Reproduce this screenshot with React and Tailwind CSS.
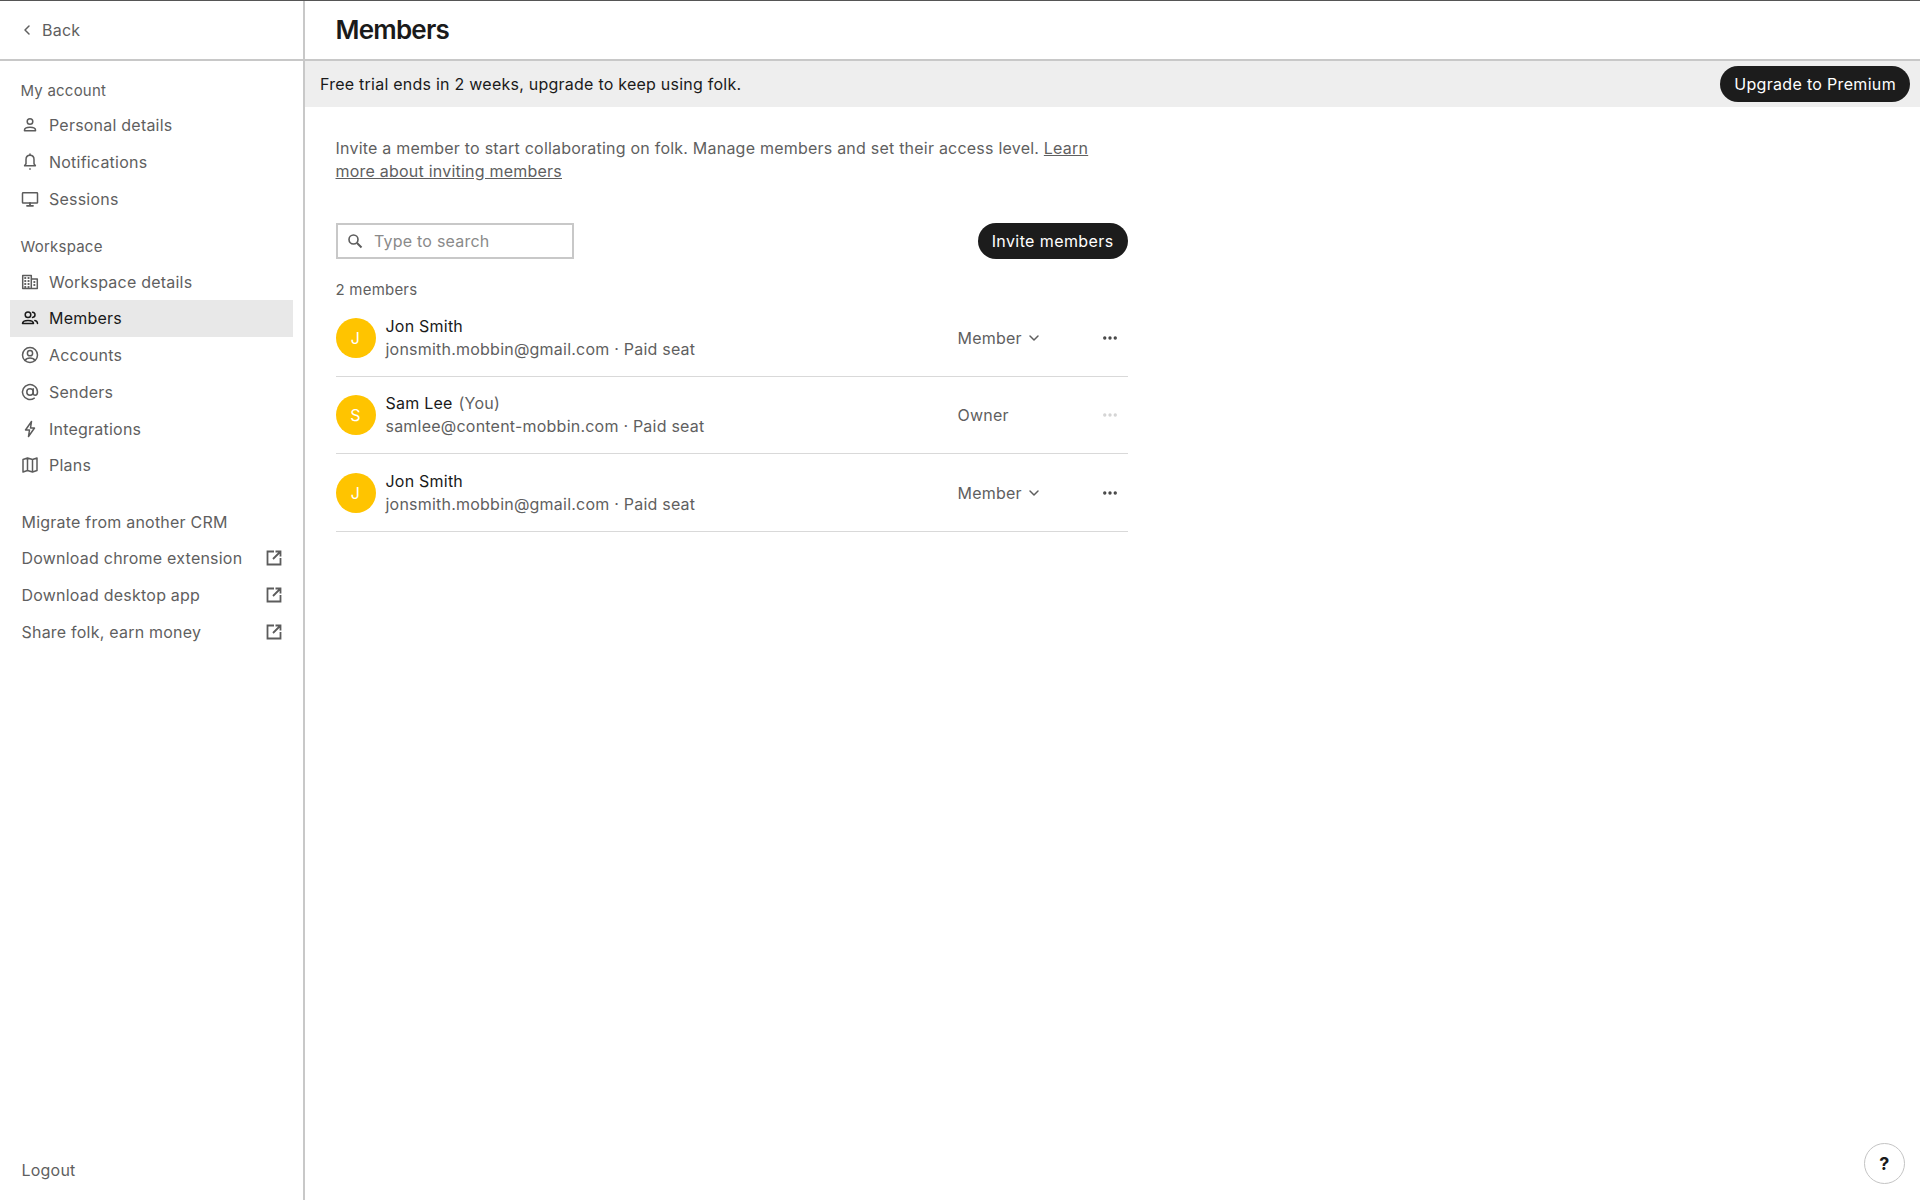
import { ChevronDown, ChevronLeft, Ellipsis } from "lucide-react";

const Ico = ({ children, className = "" }) => (
  <svg width="20" height="20" viewBox="0 0 20 20" fill="none" stroke="currentColor" strokeWidth="1.5" strokeLinecap="round" strokeLinejoin="round" className={"shrink-0 " + className}>
    {children}
  </svg>
);

const PersonIcon = () => (
  <Ico>
    <circle cx="10" cy="6.5" r="2.800" />
    <path d="M4.500 15c0-1.800 2.400-2.800 5.500-2.800s5.500 1 5.500 2.800v.8h-11z" />
  </Ico>
);
const BellIcon = () => (
  <Ico>
    <path d="M10 3.2c-2.5 0-4 1.900-4 4.300v4.300l-1.400 2h10.800l-1.400-2V7.500c0-2.400-1.500-4.300-4-4.300z" />
    <path d="M10 2v1.200M10 16.800v.4" />
  </Ico>
);
const MonitorIcon = () => (
  <Ico>
    <rect x="2.500" y="3.800" width="15" height="10.200" rx="0.600" />
    <path d="M7 16.800h6M10 14v2.800" strokeWidth="1.800" />
  </Ico>
);
const BuildingIcon = () => (
  <Ico>
    <path d="M2.700 16.500V3.500h8.600v13zM11.300 7h6v9.500h-6" />
    <path d="M5.200 6h.1M8.500 6h.1M5.200 9h.1M8.500 9h.1M5.200 12h.1M8.500 12h.1M5.200 15h.1M8.500 15h.1M14.300 10h.1M14.300 13h.1" strokeWidth="2.200" />
  </Ico>
);
const MembersIcon = () => (
  <Ico>
    <circle cx="8" cy="6.800" r="2.800" />
    <path d="M2.500 15.600c0-2 2.400-3.200 5.500-3.200s5.500 1.200 5.500 3.200zM12.500 4.200c1.500.1 2.500 1.200 2.500 2.600s-1 2.500-2.500 2.600M14.800 12.500c1.700.4 2.700 1.400 2.700 3.100" />
  </Ico>
);
const AccountIcon = () => (
  <Ico>
    <circle cx="10" cy="10" r="7.500" />
    <circle cx="10" cy="8.200" r="2.600" />
    <path d="M5 15.500c1-1.700 2.900-2.500 5-2.500s4 .8 5 2.500" />
  </Ico>
);
const AtIcon = () => (
  <Ico>
    <circle cx="10" cy="10" r="3.200" />
    <path d="M13.200 6.800v4.400c0 1.200.9 2 2 2s2.300-.9 2.300-3.200a7.500 7.500 0 1 0-3.200 6.200" />
  </Ico>
);
const BoltIcon = () => (
  <Ico>
    <path d="M11.500 2.500 5.500 11h4l-1 6.500 6-8.500h-4z" />
  </Ico>
);
const MapIcon = () => (
  <Ico>
    <path d="M3 4.500 7.500 3l5 1.500L17 3v12.500L12.500 17l-5-1.500L3 17zM7.500 3v12.500M12.500 4.500V17" />
  </Ico>
);
const ExternalIcon = () => (
  <Ico className="text-[#5c5c5c]">
    <path d="M10 3.500H3.500v13h13V10M16.500 3.500 9 11M11.500 3.500h5v5" strokeWidth="1.800" strokeLinecap="butt" strokeLinejoin="miter" />
  </Ico>
);
const SearchIcon = () => (
  <svg width="16" height="16" viewBox="0 0 16 16" fill="none" stroke="#5c5c5c" className="shrink-0">
    <circle cx="6.500" cy="6.500" r="4.500" strokeWidth="1.600" />
    <path d="M10 10l4.500 4.500" strokeWidth="2" />
  </svg>
);

const NavItem = ({ icon, label, active }) => (
  <div className={"flex h-[36.75px] items-center gap-[9px] pl-[10px] " + (active ? "bg-[#e8e8e8] text-[#1a1a1a]" : "text-[#5f5f5f]")}>
    <span className={active ? "text-[#1a1a1a]" : "text-[#5c5c5c]"}>{icon}</span>
    <span>{label}</span>
  </div>
);

const LinkItem = ({ label, external }) => (
  <div className="flex h-[36.75px] items-center justify-between pl-[11.500px] pr-[9px] text-[#5f5f5f]">
    <span>{label}</span>
    {external && <ExternalIcon />}
  </div>
);

const MemberRow = ({ initial, name, you, email, role, locked }) => (
  <div className="flex h-[77.500px] items-center border-b border-[#d9d9d9] pt-[1px]">
    <div className="flex h-10 w-10 shrink-0 items-center justify-center rounded-full bg-[#ffc400] text-white">{initial}</div>
    <div className="ml-[10px] flex-1 leading-[23px]">
      <div className="text-[#1a1a1a]">
        {name}
        {you && <span className="ml-[6px] text-[#5f5f5f]">(You)</span>}
      </div>
      <div className="text-[#5f5f5f]">{email} · Paid seat</div>
    </div>
    <div className="flex w-[143px] items-center gap-1 text-[#5f5f5f]">
      {role}
      {!locked && <ChevronDown size={16} strokeWidth={2.250} />}
    </div>
    <div className="flex w-[27px] justify-start">
      <Ellipsis size={18} strokeWidth={2.500} className={locked ? "text-[#d4d4d4]" : "text-[#444444]"} />
    </div>
  </div>
);

export default function App() {
  return (
    <div className="relative flex h-[1200px] w-full overflow-hidden border-t border-[#555555] bg-white text-[16px] tracking-[0.22px] font-['Inter',sans-serif]">
      <aside className="flex w-[305px] shrink-0 flex-col border-r-2 border-[#c8c8c8]">
        <div className="flex h-[60px] shrink-0 items-center gap-[7px] border-b-2 border-[#c8c8c8] pl-[19px] text-[#5f5f5f]">
          <ChevronLeft size={16} strokeWidth={2.250} />
          Back
        </div>
        <nav className="flex flex-1 flex-col px-[10px] pt-[14px]">
          <div className="flex h-[32px] items-center pl-[10.500px] text-[15px] text-[#5f5f5f]">My account</div>
          <NavItem icon={<PersonIcon />} label="Personal details" />
          <NavItem icon={<BellIcon />} label="Notifications" />
          <NavItem icon={<MonitorIcon />} label="Sessions" />
          <div className="mt-[14px] flex h-[32px] items-center pl-[10.500px] text-[15px] text-[#5f5f5f]">Workspace</div>
          <NavItem icon={<BuildingIcon />} label="Workspace details" />
          <NavItem icon={<MembersIcon />} label="Members" active />
          <NavItem icon={<AccountIcon />} label="Accounts" />
          <NavItem icon={<AtIcon />} label="Senders" />
          <NavItem icon={<BoltIcon />} label="Integrations" />
          <NavItem icon={<MapIcon />} label="Plans" />
          <div className="mt-[19.500px]">
            <LinkItem label="Migrate from another CRM" />
            <LinkItem label="Download chrome extension" external />
            <LinkItem label="Download desktop app" external />
            <LinkItem label="Share folk, earn money" external />
          </div>
          <div className="mt-auto mb-[12px]">
            <LinkItem label="Logout" />
          </div>
        </nav>
      </aside>

      <main className="flex min-w-0 flex-1 flex-col">
        <header className="flex h-[60px] shrink-0 items-center border-b-2 border-[#c8c8c8] pb-[2px] pl-[30.500px]">
          <h1 className="text-[26px] font-semibold tracking-[-0.03em] text-[#1a1a1a]">Members</h1>
        </header>
        <div className="flex h-[46px] shrink-0 items-center justify-between bg-[#eeeeee] pl-[15px] pr-[10px]">
          <span className="tracking-[0.24px] text-[#1a1a1a]">Free trial ends in 2 weeks, upgrade to keep using folk.</span>
          <button className="flex h-[36px] items-center rounded-full bg-[#1c1c1c] px-[14px] tracking-[0.32px] text-white">Upgrade to Premium</button>
        </div>
        <section className="w-[822.500px] pt-[30px] pl-[30.500px]">
          <p className="w-[790px] leading-[23px] text-[#5f5f5f]">
            Invite a member to start collaborating on folk. Manage members and set their access level.{" "}
            <span className="underline">Learn more about inviting members</span>
          </p>
          <div className="mt-[40px] flex items-center justify-between">
            <div className="flex h-[36px] w-[238px] items-center gap-[11.500px] border-2 border-[#c8c8c8] pl-[9px] text-[#8a8a8a]">
              <SearchIcon />
              Type to search
            </div>
            <button className="flex h-[36px] items-center rounded-full bg-[#1c1c1c] px-[14px] tracking-[0.4px] text-white">Invite members</button>
          </div>
          <div className="mt-[21px] h-[19px] text-[15px] leading-[20px] text-[#5f5f5f]">2 members</div>
          <MemberRow initial="J" name="Jon Smith" email="jonsmith.mobbin@gmail.com" role="Member" />
          <MemberRow initial="S" name="Sam Lee" you email="samlee@content-mobbin.com" role="Owner" locked />
          <MemberRow initial="J" name="Jon Smith" email="jonsmith.mobbin@gmail.com" role="Member" />
        </section>
      </main>

      <button className="absolute right-[15px] bottom-[16px] flex h-[41px] w-[41px] items-center justify-center rounded-full border border-[#c4c4c4] bg-white text-[18px] font-bold text-[#1a1a1a]">?</button>
    </div>
  );
}
